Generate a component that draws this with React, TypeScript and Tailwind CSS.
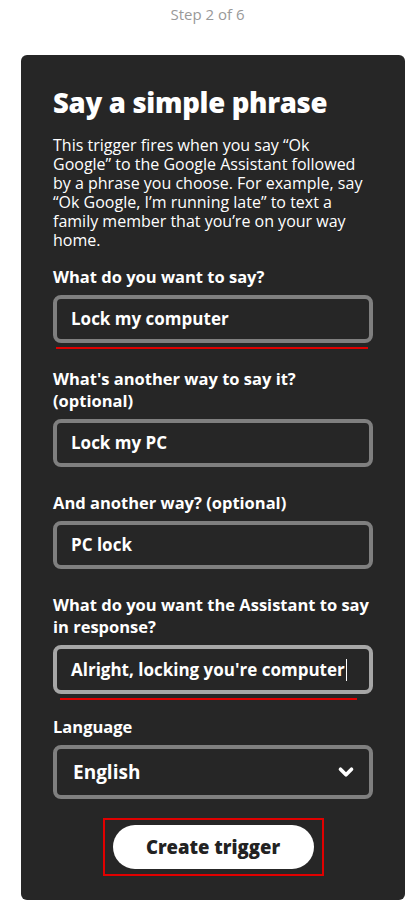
import { ChevronDown } from 'lucide-react'

const font = { fontFamily: '"Open Sans", "Noto Sans", sans-serif' }

function Field({
  label,
  value,
  focused,
  underline,
}: {
  label: React.ReactNode
  value: string
  focused?: boolean
  underline?: string
}) {
  return (
    <div className="flex flex-col">
      <label className="text-[16.5px] leading-[22px] font-bold text-white">{label}</label>
      <div
        className={`mt-[7px] h-[48px] rounded-[8px] border-[4px] flex items-center px-[14px] text-[17px] font-bold text-white ${
          focused ? 'border-[#a6a6a6] h-[49px]' : 'border-[#7f7f7f]'
        }`}
      >
        {value}
        {focused && <span className="inline-block w-px h-[22px] bg-white ml-px" />}
      </div>
      {underline ? <div className={`h-[2px] bg-[#e00000] mt-[4px] ${underline}`} /> : null}
    </div>
  )
}

export default function App() {
  return (
    <div className="w-[415px] min-h-[909px] bg-white" style={font}>
      <p className="text-center text-[15px] text-[#999] pt-[3px] leading-[22px]">Step 2 of 6</p>

      <div className="mt-[30px] ml-[21px] w-[384px] bg-[#262626] rounded-[6px] px-[32px] pt-[31px] pb-[24px]">
        <h1 className="text-[27.5px] leading-[34px] font-extrabold text-white tracking-[-0.3px]">Say a simple phrase</h1>
        <p className="mt-[16px] text-[16px] leading-[19px] text-white">
          This trigger fires when you say “Ok
          <br />
          Google” to the Google Assistant followed
          <br />
          by a phrase you choose. For example, say
          <br />
          “Ok Google, I’m running late” to text a
          <br />
          family member that you’re on your way
          <br />
          home.
        </p>

        <div className="mt-[16px] flex flex-col">
          <Field label="What do you want to say?" value="Lock my computer" underline="ml-[3px] mr-[5px]" />
          <div className="mt-[19px]">
            <Field label="What's another way to say it? (optional)" value="Lock my PC" />
          </div>
          <div className="mt-[25px]">
            <Field label="And another way? (optional)" value="PC lock" />
          </div>
          <div className="mt-[25px]">
            <Field
              label="What do you want the Assistant to say in response?"
              value="Alright, locking you're computer"
              focused
              underline="ml-[7px] mr-[16px]"
            />
          </div>

          <label className="mt-[16px] text-[16.5px] leading-[22px] font-bold text-white">Language</label>
          <div className="mt-[7px] h-[54px] rounded-[8px] border-[4px] border-[#7f7f7f] flex items-center justify-between pl-[16px] pr-[12px] text-[19px] font-bold text-white">
            English
            <ChevronDown className="w-[22px] h-[22px]" strokeWidth={4} />
          </div>

          <div className="mt-[19px] self-center border-2 border-[#e00000] px-[8px] py-[5px]">
            <button className="w-[201px] h-[44px] rounded-full bg-white text-[#222] text-[18.5px] font-extrabold">
              Create trigger
            </button>
          </div>
        </div>
      </div>
    </div>
  )
}
